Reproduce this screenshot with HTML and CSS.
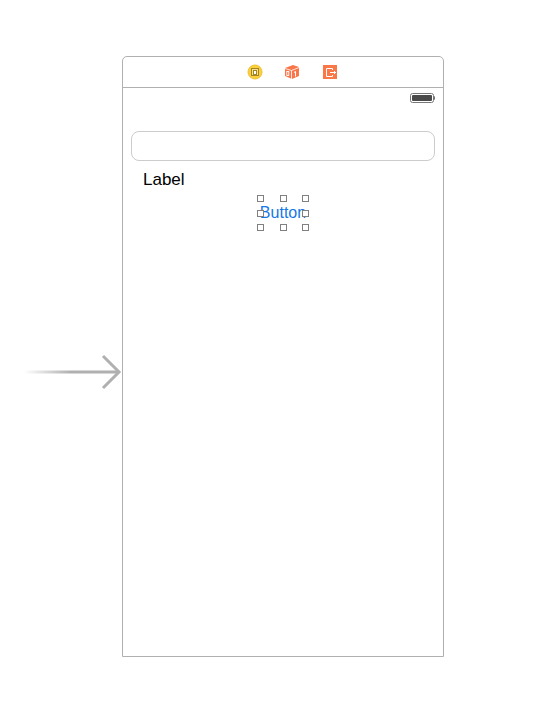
FILE: index.html
```html
<!DOCTYPE html>
<html lang="en">
<head>
  <meta charset="UTF-8" />
  <meta name="viewport" content="width=device-width, initial-scale=1.0"/>
  <title>Storyboard</title>
  <link rel="stylesheet" href="styles.css">
</head>
<body>

<main class="canvas">
  <!-- initial view controller arrow -->
  <div class="entry">
    <svg width="98" height="36" viewBox="0 0 98 36">
      <defs>
        <linearGradient id="fade" x1="0" x2="1" y1="0" y2="0">
          <stop offset="0" stop-color="#b0b0b0" stop-opacity="0"/>
          <stop offset="0.5" stop-color="#b0b0b0"/>
        </linearGradient>
      </defs>
      <rect x="0" y="16.5" width="94" height="3" fill="url(#fade)"/>
      <path d="M79 2 L95 18 L79 34" fill="none" stroke="#b0b0b0" stroke-width="3"/>
    </svg>
  </div>

  <section class="scene">
    <header class="dock">
      <svg width="16" height="16" viewBox="0 0 16 16">
        <circle cx="8" cy="8" r="7" fill="#fbd03b" stroke="#f0bf35"/>
        <rect x="4.5" y="4.5" width="7" height="7" fill="#fbe08a" stroke="#a08428"/>
        <rect x="6.5" y="6.5" width="3" height="4" fill="#fff" stroke="#a08428"/>
      </svg>
      <svg width="16" height="16" viewBox="0 0 16 16">
        <path d="M1 4 L9 1 L15 3 L15 12 L8 15 L1 12 Z" fill="#f8764a"/>
        <path d="M1 4.5 L7.5 6.5 L15 3.5 M7.5 6.5 V15" fill="none" stroke="#fff" stroke-width="0.8"/>
        <rect x="2.8" y="7.5" width="2" height="4" fill="none" stroke="#fff" stroke-width="0.9"/>
        <path d="M10 8.5 L11.5 7.5 V12.5" fill="none" stroke="#fff"/>
      </svg>
      <svg width="16" height="16" viewBox="0 0 16 16">
        <rect x="2" y="1" width="14" height="14" fill="#fa7748"/>
        <path d="M11.5 6 V4.5 H5.5 V12.5 H11.5 V11" fill="none" stroke="#fff"/>
        <path d="M9 8.5 H15 M13.5 7 V10" fill="none" stroke="#fff"/>
      </svg>
    </header>

    <div class="status-bar">
      <svg width="26" height="10" viewBox="0 0 26 10">
        <rect x="0.5" y="0.5" width="23" height="9" rx="2" fill="#fff" stroke="#777"/>
        <rect x="2" y="2" width="20" height="6" rx="1" fill="#4a4a4a"/>
        <path d="M24 3 Q25 3 25 5 Q25 7 24 7 Z" fill="#666"/>
      </svg>
    </div>

    <div class="view">
      <input type="text" id="name" class="field" />
      <label for="name" class="label">Label</label>
      <div class="selection">
        <button type="button" class="btn">Button</button>
        <div class="handles">
          <i></i><i></i><i></i>
          <i></i><i class="none"></i><i></i>
          <i></i><i></i><i></i>
        </div>
      </div>
    </div>
  </section>
</main>

</body>
</html>
```
FILE: styles.css
```css
* { box-sizing: border-box; }

body {
  font-family: "Liberation Sans", Helvetica, Arial, sans-serif;
  margin: 0;
  background-color: #fff;
}

svg { display: block; }

.canvas {
  display: grid;
  grid-template-columns: 122px 1fr 116px;
  min-height: 100vh;
  padding: 56px 0 63px;
}

.entry {
  display: flex;
  align-items: center;
  justify-content: flex-end;
  padding-top: 31px;
}

.scene {
  border: 1px solid #b0b0b0;
  border-radius: 5px 5px 0 0;
}

.dock {
  display: flex;
  justify-content: center;
  align-items: center;
  gap: 21px;
  height: 31px;
  padding-left: 18px;
  border-bottom: 1px solid #b0b0b0;
}

.status-bar {
  display: flex;
  justify-content: flex-end;
  padding: 5px 7px;
}

.view {
  display: flex;
  flex-direction: column;
  padding: 23px 8px;
}

.field {
  width: 100%;
  height: 30px;
  padding: 0 10px;
  border: 1px solid #ccc;
  border-radius: 8px;
  background: #fff;
  font: inherit;
}

.label {
  margin: 8px 12px 0;
  font-size: 17px;
  line-height: 22px;
  color: #000;
}

.selection {
  position: relative;
  align-self: center;
  width: 52px;
  height: 36px;
  margin-top: 4px;
  padding: 3px 0;
}

.btn {
  width: 100%;
  height: 30px;
  padding: 0;
  border: none;
  background: none;
  font: inherit;
  font-size: 16px;
  color: #1677e6;
  cursor: pointer;
}

/* resize handles sit over the selected control */
.handles {
  position: absolute;
  inset: 0;
  display: grid;
  grid-template-columns: repeat(3, 7px);
  grid-template-rows: repeat(3, 7px);
  justify-content: space-between;
  align-content: space-between;
  pointer-events: none;
}

.handles i {
  border: 1px solid #808080;
  background: #fff;
}

.handles .none {
  visibility: hidden;
}
```
